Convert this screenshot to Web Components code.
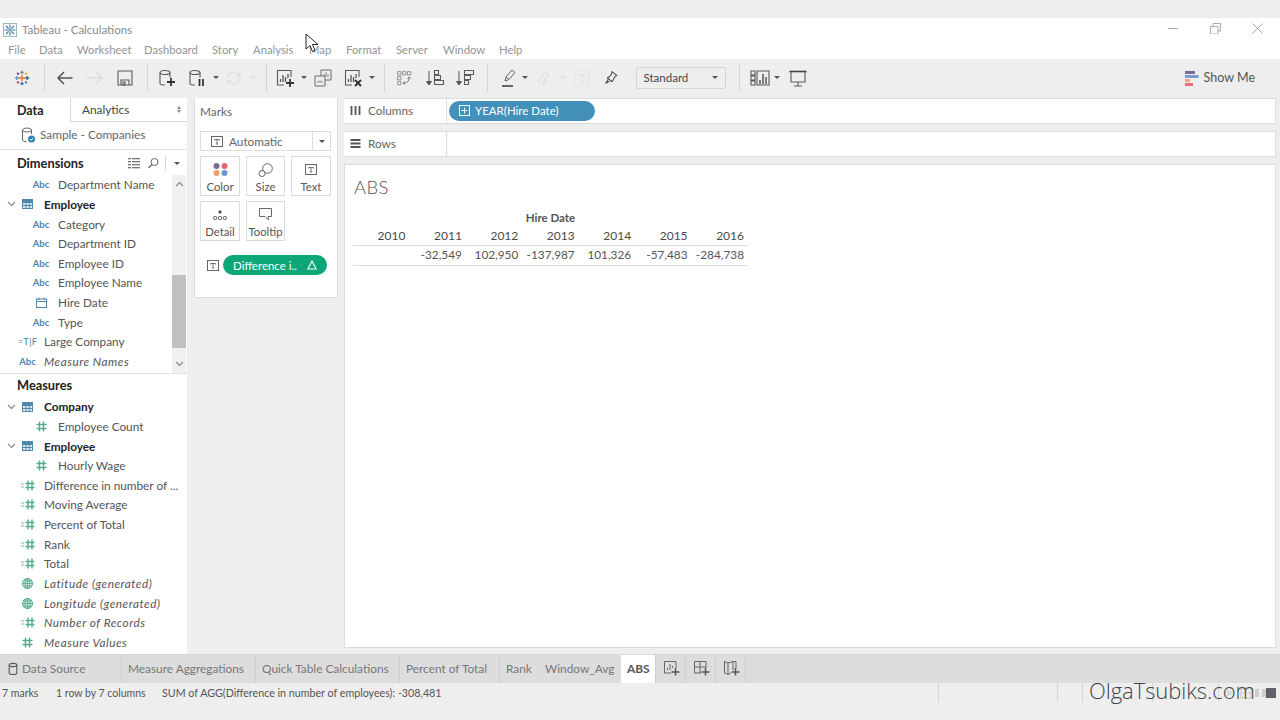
<!DOCTYPE html>
<html><head><meta charset="utf-8"><title>Tableau - Calculations</title>
<style>
html,body{margin:0;padding:0;height:720px;overflow:hidden;background:#eee;font-family:Lato,"Open Sans",sans-serif;font-size:11.8px;color:#555}
</style></head><body>
<tb-app></tb-app>
<script>
const S='stroke="#5a5a5a" fill="none" stroke-width="1.1"';
const ICONS={
 tlogo:`<rect x=".5" y=".5" width="13" height="13" fill="#fff" stroke="#9bb"/><g stroke="#3a7ea8" stroke-width="1.2"><path d="M7 1.5v11M1.5 7h11M3 3l8 8M11 3l-8 8"/></g><circle cx="7" cy="7" r="2" fill="#fff"/><path d="M5.5 7h3M7 5.5v3" stroke="#3a7ea8"/>`,
 logo:`<g transform="translate(2 2) scale(.8)" stroke-width="1.7" fill="none"><path d="M10 6v8M6 10h8" stroke="#e8762b"/><path d="M4 7v5M1.500 9.500h5" stroke="#5a9fc9" transform="translate(-.5 .5)"/><path d="M16 7v5M13.500 9.500h5" stroke="#2f6d9c" transform="translate(.5 .5)"/><path d="M10 1v4M8 3h4" stroke="#59879b"/><path d="M10 15v4M8 17h4" stroke="#1f6fa3"/><path d="M5 3v3M3.500 4.500h3" stroke="#7c3e8a"/><path d="M15 3v3M13.500 4.500h3" stroke="#eab024"/><path d="M5 14v3M3.500 15.500h3" stroke="#d13c4a"/><path d="M15 14v3M13.500 15.500h3" stroke="#2f8f8f"/></g>`,
 back:`<path d="M17.500 10H3M9 4l-6 6 6 6" stroke="#555" fill="none" stroke-width="1.5"/>`,
 fwd:`<path d="M2.500 10H17M11 4l6 6-6 6" stroke="#ddd" fill="none" stroke-width="1.5"/>`,
 save:`<path d="M3 3h14v14H3z" ${S}/><path d="M6 17v-5h8v5M8 14h2v3H8z" ${S}/>`,
 dsnew:`<ellipse cx="8" cy="4.500" rx="5" ry="2" ${S}/><path d="M3 4.500v11c0 1 2 1.500 5 1.500M13 4.500v5" ${S}/><path d="M14 10v8M10 14h8" stroke="#333" stroke-width="1.800"/>`,
 dspause:`<ellipse cx="8" cy="4.500" rx="5" ry="2" ${S}/><path d="M3 4.500v11c0 1 2 1.500 5 1.500M13 4.500v5" ${S}/><path d="M12.500 11v7M16 11v7" stroke="#333" stroke-width="1.800"/>`,
 refresh:`<path d="M4 10a6 6 0 0 1 10-4.500l2 2M16 10a6 6 0 0 1-10 4.500l-2-2M16 4v3.500h-3.500M4 16v-3.500h3.500" stroke="#ddd" fill="none" stroke-width="1.200"/>`,
 wsnew:`<path d="M16 9V2.500H2.500V17H9" ${S}/><path d="M5.500 14v-3M8 14V7M10.500 14V9M13 10V6" stroke="#555" stroke-width="1.300"/><path d="M15 11v8M11 15h8" stroke="#333" stroke-width="1.800"/>`,
 wsdup:`<path d="M8 2h10v10H8z" fill="#eee" stroke="#6a6a6a"/><path d="M11 9V6M13 9V4M15 9V6" stroke="#888"/><path d="M2 8h10v10H2z" fill="#eee" stroke="#6a6a6a"/><path d="M5 15v-2M7 15v-3M9 15v-2" stroke="#888"/>`,
 wsclear:`<path d="M16 9V2.500H2.500V17H9" ${S}/><path d="M5.500 14v-3M8 14V7M10.500 14V9M13 10V6" stroke="#555" stroke-width="1.300"/><path d="M12 12l6 6M18 12l-6 6" stroke="#333" stroke-width="1.900"/>`,
 swap:`<g transform="translate(2 2) scale(.82)"><path d="M2 2h4v4H2zM8 2h4v4H8zM14 2h4v4h-4zM2 8h4v4H2zM2 14h4v4H2z" stroke="#777" fill="none" stroke-width=".9"/><path d="M9 16c4 0 7-2 7-7M14 10.500l2-2 2 2M10.500 14l-2 2 2 2" stroke="#555" fill="none"/></g>`,
 sortasc:`<path d="M4 3v13M1.500 13.500L4 17l2.500-3.500z" stroke="#555" fill="#555"/><path d="M9.500 3h4v4h-4zM9.500 8h6v4h-6zM9.500 13h9v4h-9z" ${S} transform="translate(0 -.5)"/>`,
 sortdesc:`<path d="M4 3v13M1.500 13.500L4 17l2.500-3.500z" stroke="#555" fill="#555"/><path d="M9.500 3h9v4h-9zM9.500 8h6v4h-6zM9.500 13h4v4h-4z" ${S} transform="translate(0 -.5)"/>`,
 pen:`<path d="M6 13l1-4 6-7 3 2.500-6 7z" stroke="#666" fill="none"/><path d="M3 18h11" stroke="#444" stroke-width="1.600"/><path d="M7 9l3 2.500" stroke="#666"/>`,
 clip:`<path d="M6 16c-2-2 0-5 2-8s3-5 5-4 1 3-1 6-4 6-3 6 2-1 4-4" stroke="#ddd" fill="none" stroke-width="1.200"/>`,
 lbl:`<path d="M3 3h14v14H3z" stroke="#ddd" fill="none" stroke-dasharray="1.500 1.500"/><path d="M7 7h6M10 7v7M8.500 14h3" stroke="#ddd" fill="none"/>`,
 pin:`<g transform="translate(2.500 2) scale(.78)"><path d="M11 2l6 5-2 1-3 5-1 2-6-5 2-1 3-3zM6 12l-3 5 5-3" stroke="#444" fill="none" stroke-width="1.300" stroke-linejoin="round"/></g>`,
 showme:`<path d="M1 3h4v4H1zM1 8h4v4H1zM1 13h4v4H1z" ${S}/><path d="M7 3h12v14H7z" ${S}/><path d="M10 16v-4M13 16V6M16 16V9" stroke="#555" stroke-width="1.500"/>`,
 present:`<path d="M1.500 3.500h17" stroke="#444" stroke-width="1.600"/><path d="M3 4v10h14V4" ${S}/><path d="M10 14v4M6 18h8" ${S}/>`,
 bars:`<rect y="1" width="10" height="3" fill="#7d6a94"/><rect y="5" width="13.500" height="3" fill="#7a9ccc"/><rect y="9" width="5" height="3" fill="#f0a878"/><rect y="13" width="8" height="3" fill="#e8707a"/>`,
 ds:`<ellipse cx="7" cy="4" rx="4.500" ry="2" stroke="#666" fill="none"/><path d="M2.500 4v10c0 1 2 1.500 4 1.500M11.500 4v4" stroke="#666" fill="none"/><circle cx="11.500" cy="13" r="3.500" fill="#2f82b3"/><path d="M9.800 13l1.300 1.300 2-2.300" stroke="#fff" fill="none"/>`,
 dsgrey:`<ellipse cx="7" cy="4" rx="3.800" ry="1.600" ${S}/><path d="M3.200 4v8c0 2 7.600 2 7.600 0V4" ${S}/>`,
 list:`<g fill="#777"><rect x="0" y="1" width="3" height="1.300"/><rect x="4" y="1" width="8" height="1.300"/><rect x="0" y="4" width="3" height="1.300"/><rect x="4" y="4" width="8" height="1.300"/><rect x="0" y="7" width="3" height="1.300"/><rect x="4" y="7" width="8" height="1.300"/><rect x="0" y="10" width="3" height="1.300"/><rect x="4" y="10" width="8" height="1.300"/></g>`,
 search:`<circle cx="7.500" cy="5" r="3.500" stroke="#666" fill="none"/><path d="M5 7.500L1.500 11" stroke="#666" stroke-width="1.300"/>`,
 table:`<rect x=".5" y=".5" width="10" height="9" fill="#dde9f0" stroke="#4f89aa"/><path d="M.5 3.500h10M.5 6.500h10M4 3.500v6M7.300 3.500v6" stroke="#4f89aa"/><rect x=".5" y=".5" width="10" height="2.500" fill="#4f89aa"/>`,
 chev:`<path d="M1 1l3.500 3.500L8 1" stroke="#888" fill="none" stroke-width="1.100"/>`,
 cal:`<rect x=".5" y="2" width="10" height="8.500" stroke="#4d86a8" fill="none"/><path d="M.5 4.500h10M3 .5v2.500M8 .5v2.500" stroke="#4d86a8"/>`,
 hash:`<path d="M3.500 .5v10M7.500 .5v10M.5 3.500h10M.5 7.500h10" stroke="#4fae88" stroke-width="1.400" fill="none"/>`,
 calchash:`<path d="M0 4h3M0 7h3" stroke="#7fb8a8" stroke-width="1.200"/><path d="M7 .5v10M11 .5v10M4.500 3.500h9M4.500 7.500h9" stroke="#4fae88" stroke-width="1.400" fill="none"/>`,
 globe:`<circle cx="5.500" cy="5.500" r="5" stroke="#45ae88" fill="#d3ece2"/><path d="M.5 5.500h10M5.500 .5v10M1.500 3h8M1.500 8h8" stroke="#45ae88" stroke-width=".8"/><ellipse cx="5.500" cy="5.500" rx="2.500" ry="5" stroke="#45ae88" fill="none" stroke-width=".8"/>`,
 t:`<rect x=".5" y=".5" width="11" height="10" stroke="#666" fill="#fff"/><path d="M3.500 3.500h5M6 3.500v4.500M4.800 8h2.400M3.500 3.500v1M8.500 3.500v1" stroke="#666" fill="none" stroke-width=".9"/>`,
 dots:`<circle cx="4.500" cy="4" r="3" fill="#7b6a94"/><circle cx="12.500" cy="4" r="3" fill="#e5636d"/><circle cx="4.500" cy="11" r="3" fill="#ef9f69"/><circle cx="12.500" cy="11" r="3" fill="#6f97cf"/>`,
 size:`<circle cx="9.500" cy="5.500" r="4.800" stroke="#666" fill="#fff"/><circle cx="4" cy="10.500" r="3" stroke="#666" fill="#fff"/>`,
 detail:`<circle cx="7" cy="2" r="1.700" fill="#555"/><circle cx="2.200" cy="8" r="1.700" stroke="#666" fill="none"/><circle cx="7" cy="8" r="1.700" stroke="#666" fill="none"/><circle cx="11.800" cy="8" r="1.700" stroke="#666" fill="none"/>`,
 tip:`<path d="M.5 .5h12v8H9l.5 3.500-3.500-3.500H.5z" stroke="#666" fill="#fff"/>`,
 delta:`<path d="M5 1L.9 9h8.200z" stroke="#fff" fill="none" stroke-width="1.100"/>`,
 plusbox:`<rect x=".5" y=".5" width="10" height="10" stroke="#fff" fill="none"/><path d="M5.500 2.500v6M2.500 5.500h6" stroke="#fff"/>`,
 tnew:`<path d="M13 8V1.500H1.500V13H8" stroke="#666" fill="none"/><path d="M4.500 10V8M7 10V4M9.500 8V6" stroke="#666"/><path d="M12.500 8v7.500M8.500 12h8" stroke="#555" stroke-width="1.500"/>`,
 tdash:`<path d="M8 13H1.500V1.500H13V8M1.500 7h11.500M7 1.500V13" stroke="#666" fill="none"/><path d="M12.500 8v7.500M8.500 12h8" stroke="#555" stroke-width="1.500"/>`,
 tstory:`<path d="M8 13l-3 1.500V3L1.500 1.500V13L5 14.500M5 3l5-1.500h3V8M10 1.500V10" stroke="#666" fill="none"/><path d="M12.500 8v7.500M8.500 12h8" stroke="#555" stroke-width="1.500"/>`,
 sfaint:`<path d="M8 2v8l6-4z" fill="#d8d8d8"/><rect x="22" y="1" width="10" height="10" fill="none" stroke="#d0d0d0" stroke-width="1.500"/><path d="M27 1v10M22 6h10" stroke="#d0d0d0"/><path d="M36 2h4v8h-4zM43 2h4v8h-4z" fill="#cfcfcf"/>`,
 min:`<path d="M0 5.500h10" stroke="#aaa"/>`,
 max:`<path d="M.5 3.500h7.500v7.500H.5zM3 3V.5h7.500V8H8" stroke="#aaa" fill="none"/>`,
 close:`<path d="M.5 .5l10 10M10.500 .5l-10 10" stroke="#aaa" fill="none"/>`,
 cursor:`<path d="M1 1v15l4-3.500 2.500 6 2.500-1-2.500-6H13z" stroke="#222" fill="#fff" stroke-width="1"/>`
};
const SIZES={tlogo:[14,14],cursor:[14,20],bars:[14,16],ds:[16,17],dsgrey:[14,15],list:[13,12],search:[12,12],table:[11,10],chev:[9,6],cal:[11,11],hash:[11,11],calchash:[14,11],globe:[11,11],t:[12,11],dots:[17,15],size:[15,14],detail:[14,10],tip:[13,13],delta:[10,10],plusbox:[11,11],tnew:[17,16],tdash:[17,16],tstory:[17,16],min:[10,11],max:[11,11],close:[11,11],sfaint:[48,12]};
class TbIcon extends HTMLElement{constructor(){super();this.attachShadow({mode:'open'})}
 connectedCallback(){const n=this.getAttribute('name');const [w,h]=SIZES[n]||[20,20];
  this.shadowRoot.innerHTML=`<style>:host{display:inline-flex;line-height:0;flex:none;align-self:center}</style><svg xmlns="http://www.w3.org/2000/svg" width="${w}" height="${h}" viewBox="0 0 ${w} ${h}">${ICONS[n]}</svg>`}}
customElements.define('tb-icon',TbIcon);

class TbCaret extends HTMLElement{constructor(){super();this.attachShadow({mode:'open'}).innerHTML=`<style>:host{display:block;width:0;height:0;flex:none;border:3px solid transparent;border-top:3.500px solid var(--c,#555);border-bottom:0}</style>`}}
customElements.define('tb-caret',TbCaret);

class TbTitlebar extends HTMLElement{constructor(){super();this.attachShadow({mode:'open'}).innerHTML=`<style>
:host{display:flex;align-items:center;height:23px;background:#fff;padding:0 17px 0 3px;color:#8a8a8a;font-size:11.5px}
.t{margin-left:5px}.sp{flex:1}.w{display:flex;gap:31.500px;align-items:center;padding-bottom:3px}
</style><tb-icon name="tlogo"></tb-icon><span class="t">Tableau - Calculations</span><span class="sp"></span>
<div class="w"><tb-icon name="min"></tb-icon><tb-icon name="max"></tb-icon><tb-icon name="close"></tb-icon></div>`}}
customElements.define('tb-titlebar',TbTitlebar);

class TbMenu extends HTMLElement{constructor(){super();const m=['File','Data','Worksheet','Dashboard','Story','Analysis','Map','Format','Server','Window','Help'];
 let h='';const widths=[31,38,67,68,41,56,37,50,47,56,30];
 m.forEach((x,i)=>{h+=`<span style="width:${widths[i]}px">${x}</span>`});
 this.attachShadow({mode:'open'}).innerHTML=`<style>:host{display:flex;align-items:center;box-sizing:border-box;height:18px;padding:0 0 2px 8px;background:#fff;color:#949494;font-size:11.3px}span{display:block;flex:none;white-space:nowrap}</style>${h}`}}
customElements.define('tb-menu',TbMenu);

class TbToolbar extends HTMLElement{constructor(){super();
 const it=[['logo',22],['sep',44],['back',65],['fwd',95],['save',125],['sep',147],['dsnew',167],['dspause',197],['c',216],['refresh',234],['cl',253],['sep',266],['wsnew',285],['c',304],['wsdup',323],['wsclear',353],['c',372],['sep',384],['swap',404],['sortasc',435],['sortdesc',465],['sep',487],['pen',509],['c',525],['clip',544],['cl',563],['lbl',582],['pin',611],['std',680.500],['sep',739],['showme',760],['c',777],['present',798]];
 let end=0,h='';
 for(const [n,x] of it){const w=n=='sep'?1:n=='c'||n=='cl'?6:n=='std'?90:20;const l=x-w/2;const ml=l-end;end=l+w;
  const st=`margin-left:${ml}px`;
  if(n=='sep')h+=`<i class="sep" style="${st}"></i>`;
  else if(n=='c')h+=`<tb-caret style="${st}"></tb-caret>`;
  else if(n=='cl')h+=`<tb-caret style="${st};--c:#ddd"></tb-caret>`;
  else if(n=='std')h+=`<div class="std" style="${st}"><span>Standard</span><tb-caret></tb-caret></div>`;
  else h+=`<tb-icon name="${n}" style="${st}"></tb-icon>`;}
 this.attachShadow({mode:'open'}).innerHTML=`<style>
 :host{display:flex;align-items:center;box-sizing:border-box;height:39px;padding-bottom:2px;background:#eee;color:#444}
 .sep{display:block;width:1px;height:28px;background:#d4d4d4;flex:none}
 .std{box-sizing:border-box;flex:none;width:90px;height:22px;border:1px solid #d2d6d6;border-radius:2px;display:flex;align-items:center;justify-content:space-between;padding:0 7px;font-size:11.5px;color:#444}
 .sm{margin-left:auto;margin-right:25px;display:flex;align-items:center;gap:5px;font-size:12.500px;color:#555}
 </style>${h}<div class="sm"><tb-icon name="bars"></tb-icon><span>Show Me</span></div>`}}
customElements.define('tb-toolbar',TbToolbar);

class TbField extends HTMLElement{constructor(){super();this.attachShadow({mode:'open'})}
 connectedCallback(){const k=this.getAttribute('kind'),lv=this.getAttribute('lv')||'2',it=this.hasAttribute('italic'),b=k=='group';
  let ic;
  if(k=='abc')ic='<b class="abc">Abc</b>';else if(k=='tf')ic='<span class="abc tf">=T|F</span>';
  else if(k=='group')ic='<tb-icon name="table"></tb-icon>';else ic=`<tb-icon name="${k}"></tb-icon>`;
  this.shadowRoot.innerHTML=`<style>
  :host{display:flex;align-items:center;height:19.640px;white-space:nowrap;font-size:11.8px;color:#555;position:relative}
  .ch{width:22px;display:flex;justify-content:center;flex:none}
  .ic{display:flex;justify-content:center;flex:none;width:${lv=='2'?'24px':'23px'};margin-left:${lv=='2'?'29px':'16px'}}
  .tx{margin-left:5px;${it?'font-style:italic;letter-spacing:.5px;':''}${b?'font-weight:700;color:#222;':''}}
  .abc{font-size:9.500px;font-weight:700;color:#4d86a8;white-space:nowrap}.tf{font-weight:400;letter-spacing:.2px}
  </style>${b?`<div class="ch"><tb-icon name="chev"></tb-icon></div><div class="ic" style="margin-left:0;width:11px">${ic}</div><span class="tx" style="margin-left:11px"><slot></slot></span>`
  :`<div class="ic">${ic}</div><span class="tx"><slot></slot></span>`}`;}}
customElements.define('tb-field',TbField);

class TbDataPane extends HTMLElement{constructor(){super();this.attachShadow({mode:'open'}).innerHTML=`<style>
:host{display:flex;flex-direction:column;width:187px;flex:none;background:#fff;color:#555;overflow:hidden}
.tabs{display:flex;height:25px;flex:none;align-items:center}
.d{width:70px;padding-left:17px;box-sizing:border-box;font-weight:700;font-size:12.500px;color:#222;line-height:24px}
.a{flex:1;height:24px;box-sizing:border-box;border-left:1px solid #d8d8d8;border-bottom:1px solid #d8d8d8;display:flex;align-items:center;justify-content:space-between;padding:0 6px 0 11px;color:#444;align-self:flex-start}
.ud{display:flex;flex-direction:column;gap:1px}.ud i{display:block;border:2.500px solid transparent;border-top:0;border-bottom:3px solid #888}.ud i+i{border-bottom:0;border-top:3px solid #888}
.ds{height:27px;flex:none;display:flex;align-items:center;box-sizing:border-box;padding:0 0 3px 20px;gap:4px;border-bottom:1px solid #e2e2e2;color:#666}
.h{height:25px;flex:none;display:flex;align-items:center;box-sizing:border-box;padding:1px 0 0 17px;font-weight:700;font-size:12.800px;color:#222}
.h .sp{flex:1}.h tb-icon{margin-right:6px}.h .bar{width:1px;height:15px;background:#d8d8d8;margin:0 8px 0 6px}.h tb-caret{margin-right:7px}
.dims{height:199px;flex:none;display:flex;border-bottom:1px solid #e2e2e2;box-sizing:border-box}
.rows{flex:1;overflow:hidden}
.sb{width:14px;margin-right:1px;flex:none;background:#f0f0f0;display:flex;flex-direction:column;align-items:center}
.ar{height:100px;flex:none;display:flex;justify-content:center;align-items:flex-start;padding-top:6px;box-sizing:border-box}
.ar tb-icon{align-self:flex-start}
.th{width:100%;height:73px;flex:none;background:#c0c0c0}
.ar2{flex:1;display:flex;align-items:flex-end;padding-bottom:6px}
.ar2 tb-icon{align-self:flex-end}
.mh{height:23px;padding:0 0 2px 17px}
</style>
<div class="tabs"><div class="d">Data</div><div class="a"><span>Analytics</span><span class="ud"><i></i><i></i></span></div></div>
<div class="ds"><tb-icon name="ds"></tb-icon><span>Sample - Companies</span></div>
<div class="h"><span>Dimensions</span><span class="sp"></span><tb-icon name="list"></tb-icon><tb-icon name="search" style="margin-right:0"></tb-icon><span class="bar"></span><tb-caret></tb-caret></div>
<div class="dims"><div class="rows">
<tb-field kind="abc">Department Name</tb-field>
<tb-field kind="group">Employee</tb-field>
<tb-field kind="abc">Category</tb-field>
<tb-field kind="abc">Department ID</tb-field>
<tb-field kind="abc">Employee ID</tb-field>
<tb-field kind="abc">Employee Name</tb-field>
<tb-field kind="cal">Hire Date</tb-field>
<tb-field kind="abc">Type</tb-field>
<tb-field kind="tf" lv="1">Large Company</tb-field>
<tb-field kind="abc" lv="1" italic>Measure Names</tb-field>
</div><div class="sb"><div class="ar"><tb-icon name="chev" style="transform:scaleY(-1)"></tb-icon></div><div class="th"></div><div class="ar2"><tb-icon name="chev"></tb-icon></div></div></div>
<div class="h mh">Measures</div>
<tb-field kind="group">Company</tb-field>
<tb-field kind="hash">Employee Count</tb-field>
<tb-field kind="group">Employee</tb-field>
<tb-field kind="hash">Hourly Wage</tb-field>
<tb-field kind="calchash" lv="1">Difference in number of ...</tb-field>
<tb-field kind="calchash" lv="1">Moving Average</tb-field>
<tb-field kind="calchash" lv="1">Percent of Total</tb-field>
<tb-field kind="calchash" lv="1">Rank</tb-field>
<tb-field kind="calchash" lv="1">Total</tb-field>
<tb-field kind="globe" lv="1" italic>Latitude (generated)</tb-field>
<tb-field kind="globe" lv="1" italic>Longitude (generated)</tb-field>
<tb-field kind="calchash" lv="1" italic>Number of Records</tb-field>
<tb-field kind="hash" lv="1" italic>Measure Values</tb-field>`}}
customElements.define('tb-data-pane',TbDataPane);

class TbCard extends HTMLElement{constructor(){super();this.attachShadow({mode:'open'})}
 connectedCallback(){this.shadowRoot.innerHTML=`<style>:host{display:flex;flex-direction:column;align-items:center;box-sizing:border-box;height:40px;border:1px solid #dcdcdc;background:#fff;font-size:11.300px;color:#555;padding-top:5px;line-height:13px}
 .i{height:15px;display:flex;align-items:center;justify-content:center;margin-bottom:3px}</style><div class="i"><tb-icon name="${this.getAttribute('icon')}"></tb-icon></div><slot></slot>`}}
customElements.define('tb-card',TbCard);

class TbMarks extends HTMLElement{constructor(){super();this.attachShadow({mode:'open'}).innerHTML=`<style>
:host{display:flex;flex-direction:column;box-sizing:border-box;width:144px;height:200px;flex:none;background:#fff;border:1px solid #dcdcdc;border-top:0;padding:0 6px 0 5px;color:#555}
.h{height:33px;display:flex;align-items:center;padding-bottom:6px;box-sizing:border-box;color:#666}
.sel{height:20px;box-sizing:border-box;border:1px solid #dcdcdc;display:flex;align-items:center;margin-bottom:5px;color:#666}
.sel tb-icon{margin:0 6px 0 10px}.sel span{flex:1}.sel .c{width:18px;height:100%;box-sizing:border-box;border-left:1px solid #dcdcdc;display:flex;align-items:center;justify-content:center;flex:none}
.g{display:grid;grid-template-columns:40px 39px 40px;column-gap:6px;row-gap:5px}
.pr{display:flex;align-items:center;margin-top:14px;padding-left:7px}
.pill{margin-left:4px;width:104px;height:20px;border-radius:10px;background:#0da678;color:#fff;display:flex;align-items:center;justify-content:space-between;box-sizing:border-box;padding:0 10px;font-size:11.500px}
</style><div class="h">Marks</div>
<div class="sel"><tb-icon name="t"></tb-icon><span>Automatic</span><div class="c"><tb-caret></tb-caret></div></div>
<div class="g"><tb-card icon="dots">Color</tb-card><tb-card icon="size">Size</tb-card><tb-card icon="t">Text</tb-card><tb-card icon="detail">Detail</tb-card><tb-card icon="tip">Tooltip</tb-card></div>
<div class="pr"><tb-icon name="t"></tb-icon><div class="pill"><span>Difference i..</span><tb-icon name="delta"></tb-icon></div></div>`}}
customElements.define('tb-marks',TbMarks);

class TbShelf extends HTMLElement{constructor(){super();this.attachShadow({mode:'open'})}
 connectedCallback(){const ic=this.getAttribute('icon');
 const svg=ic=='col'?`<svg width="11" height="11" viewBox="0 0 11 11"><path d="M1.500 1v9M5.500 1v9M9.500 1v9" stroke="#555" stroke-width="1.800"/></svg>`:`<svg width="11" height="11" viewBox="0 0 11 11"><path d="M.5 2h10M.5 5.500h10M.5 9h10" stroke="#555" stroke-width="1.800"/></svg>`;
 this.shadowRoot.innerHTML=`<style>:host{display:flex;height:26px;flex:none;background:#fff;border:1px solid #dcdcdc;border-left:0;box-sizing:border-box;color:#666}
 .l{box-sizing:border-box;width:103px;flex:none;border-right:1px solid #dcdcdc;display:flex;align-items:center;gap:7px;padding:0 0 1px 6px}
 .c{flex:1;display:flex;align-items:center;padding:0 0 1px 2px}</style>
 <div class="l">${svg}<span>${this.getAttribute('label')}</span></div><div class="c"><slot></slot></div>`}}
customElements.define('tb-shelf',TbShelf);

class TbPill extends HTMLElement{constructor(){super();this.attachShadow({mode:'open'}).innerHTML=`<style>:host{display:flex;align-items:center;gap:5px;width:146px;height:20px;box-sizing:border-box;border-radius:10px;background:#4390ba;color:#fff;padding-left:10px;font-size:11.500px}</style><tb-icon name="plusbox"></tb-icon><slot></slot>`}}
customElements.define('tb-pill',TbPill);

class TbView extends HTMLElement{constructor(){super();
 const y=[2010,2011,2012,2013,2014,2015,2016],v=['','-32,549','102,950','-137,987','101,326','-57,483','-284,738'];
 this.attachShadow({mode:'open'}).innerHTML=`<style>
 :host{display:block;flex:1;background:#fff;border:1px solid #dcdcdc;padding:0 0 0 8px;box-sizing:border-box}
 h1{margin:9px 0 0 1px;font-size:18.500px;font-weight:300;color:#555;height:34px;line-height:26px;letter-spacing:.4px}
 .tbl{width:395px;color:#555}
 .top{text-align:center;font-weight:700;font-size:11.500px;height:19px;line-height:19px;color:#555}
 .r{display:grid;grid-template-columns:repeat(7,1fr);height:19px;line-height:18px;text-align:right}
 .r span{padding-right:4px;white-space:nowrap}
 .yr{font-size:12px;color:#4a4a4a;border-bottom:1px solid #dedede;height:18px;line-height:18px}
 .val{border-bottom:1px solid #dedede;color:#555;font-size:11.800px}
 </style><h1>ABS</h1><div class="tbl"><div class="top">Hire Date</div>
 <div class="r yr">${y.map(a=>`<span>${a}</span>`).join('')}</div>
 <div class="r val">${v.map(a=>`<span>${a}</span>`).join('')}</div></div>`}}
customElements.define('tb-view',TbView);

class TbTabs extends HTMLElement{constructor(){super();
 const t=[['Data Source',122,'ds'],['Measure Aggregations',134],['Quick Table Calculations',144],['Percent of Total',100],['Rank',40,'',1],['Window_Avg',81,'a'],['ABS',35,'on']];
 let h='';
 for(const [n,w,f,ns] of t){h+=`<div class="t ${f=='on'?'on':''} ${ns||f=='a'?'ns':''}" style="width:${w}px;${f=='ds'?'padding-left:6px;gap:2px':f=='on'?'padding-left:6px':f=='a'?'padding-left:5px':n=='Rank'?'padding-left:6px':'padding-left:6px'}">${f=='ds'?'<tb-icon name="dsgrey"></tb-icon>':''}<span>${n}</span></div>`}
 for(const n of ['tnew','tdash','tstory'])h+=`<div class="t ic" style="width:30px;padding-left:2px"><tb-icon name="${n}"></tb-icon></div>`;
 this.attachShadow({mode:'open'}).innerHTML=`<style>
 :host{display:flex;height:29px;background:#ddd;border-top:1px solid #d3dbd7;box-sizing:border-box;color:#777;font-size:11.850px;flex:none}
 .t{box-sizing:border-box;height:100%;display:flex;align-items:center;padding-bottom:2px;border-right:1px solid #cfcfcf;white-space:nowrap;flex:none}
 .ns{border-right:0}
 .on{background:#fff;font-weight:700;color:#555;border-right:1px solid #cfcfcf}
 .ic{justify-content:center}
 </style>${h}`}}
customElements.define('tb-tabs',TbTabs);

class TbStatus extends HTMLElement{constructor(){super();this.attachShadow({mode:'open'}).innerHTML=`<style>
:host{display:flex;height:19px;align-items:center;padding-left:2px;font-size:10.500px;color:#555;white-space:nowrap;flex:none}
span{flex:none}
i{display:block;width:1px;height:100%;background:#d6d6d6;flex:none}
.sq{width:10px;height:10px;background:#606068;flex:none;margin-left:-1px}
</style><span style="width:54px">7 marks</span><span style="width:106px">1 row by 7 columns</span><span style="flex:1;font-size:10.700px">SUM of AGG(Difference in number of employees): -308,481</span>
<i style="margin-right:118px"></i><i style="margin-right:24px"></i><i style="margin-right:69px"></i><i style="margin-right:65px"></i><i style="margin-right:0"></i><tb-icon name="sfaint"></tb-icon><div class="sq"></div><div style="width:4px"></div>`}}
customElements.define('tb-status',TbStatus);

class TbApp extends HTMLElement{constructor(){super();this.attachShadow({mode:'open'}).innerHTML=`<style>
:host{display:flex;flex-direction:column;width:1280px;height:720px;background:#eee;position:relative;overflow:hidden}
.top{height:18px;flex:none}
.main{display:flex;height:556px;flex:none;gap:7px}
.m{display:flex;flex-direction:column;flex:none}
.r{flex:1;display:flex;flex-direction:column;gap:7px;padding:0 4px 6px 0;margin-left:-1px;min-width:0}
.wm{position:absolute;left:1089px;top:675px;font:300 22px "Open Sans",sans-serif;color:#3d474f;letter-spacing:-.05px;line-height:30px;white-space:nowrap}
.cur{position:absolute;left:305px;top:33px}
</style><div class="top"></div><tb-titlebar></tb-titlebar><tb-menu></tb-menu><tb-toolbar></tb-toolbar>
<div class="main"><tb-data-pane></tb-data-pane><div class="m"><tb-marks></tb-marks></div>
<div class="r"><tb-shelf icon="col" label="Columns"><tb-pill>YEAR(Hire Date)</tb-pill></tb-shelf><tb-shelf icon="row" label="Rows"></tb-shelf><tb-view></tb-view></div></div>
<tb-tabs></tb-tabs><tb-status></tb-status>
<div class="wm">OlgaTsubiks.com</div><tb-icon class="cur" name="cursor"></tb-icon>`}}
customElements.define('tb-app',TbApp);
</script></body></html>
